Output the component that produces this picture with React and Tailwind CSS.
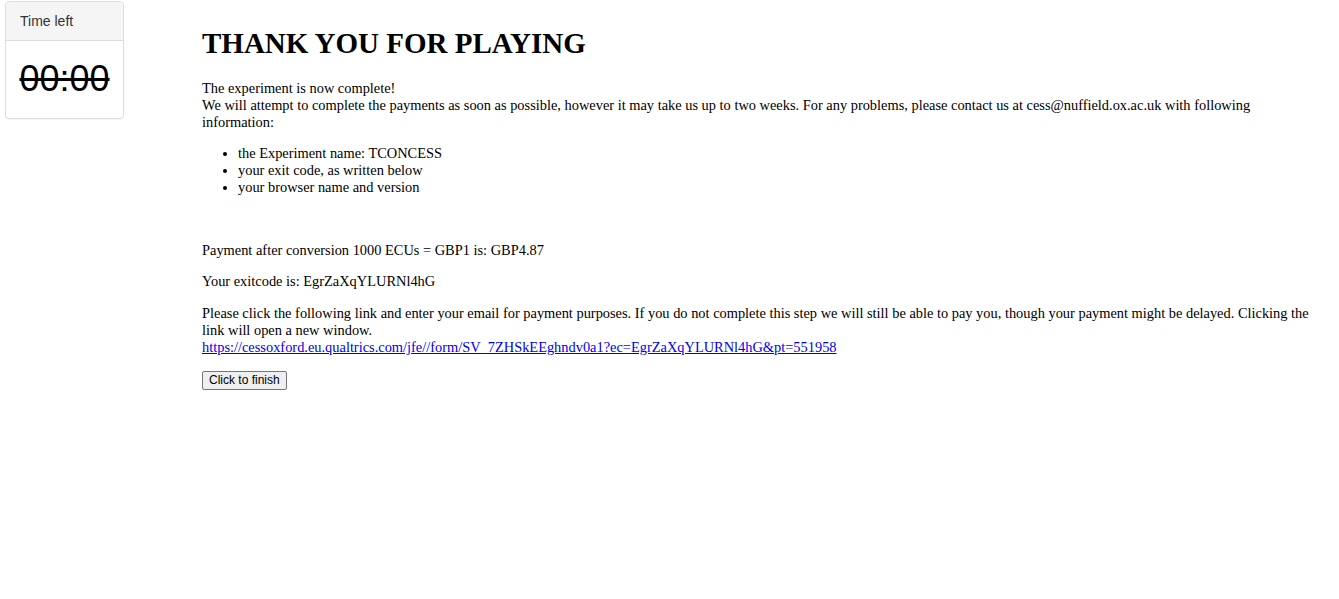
export default function App() {
  return (
    <div className="flex min-h-[599px] bg-white">
      <div className="w-[202px] shrink-0 pl-[5px] pt-[1px]">
        <div className="w-[119px] rounded-[4px] border border-[#dddddd] bg-white shadow-[0_1px_1px_rgba(0,0,0,0.05)]">
          <div className="h-[39px] rounded-t-[3px] border-b border-[#dddddd] bg-[#f5f5f5] px-[14px] pt-[9px] font-['Liberation_Sans',Arial,sans-serif] text-[14px] leading-[20px] text-[#333333]">
            Time left
          </div>
          <div className="flex h-[77px] items-center justify-center pb-[2px] font-['Liberation_Sans',Arial,sans-serif] text-[36px] leading-none text-black line-through">
            00:00
          </div>
        </div>
      </div>
      <div className="flex-1 pr-[20px] font-['Liberation_Serif','Times_New_Roman',serif] text-[14.4px] leading-[17px] text-black">
        <h1 className="mt-[26px] mb-[20px] text-[29px] font-bold leading-[34px]">THANK YOU FOR PLAYING</h1>
        <p>
          The experiment is now complete!
          <br />
          We will attempt to complete the payments as soon as possible, however it may take us up to two weeks. For any problems, please contact us at cess@nuffield.ox.ac.uk with following information:
        </p>
        <ul className="my-[14px] list-disc pl-[36px]">
          <li>the Experiment name: TCONCESS</li>
          <li>your exit code, as written below</li>
          <li>your browser name and version</li>
        </ul>
        <div className="h-[32px]" />
        <p className="mb-[14px]">Payment after conversion 1000 ECUs = GBP1 is: GBP4.87</p>
        <p className="mb-[15px]">Your exitcode is: EgrZaXqYLURNl4hG</p>
        <p className="mb-[15px]">
          Please click the following link and enter your email for payment purposes. If you do not complete this step we will still be able to pay you, though your payment might be delayed. Clicking the link will open a new window.
          <br />
          <a href="#" className="text-[#0000ee] underline">
            https://cessoxford.eu.qualtrics.com/jfe//form/SV_7ZHSkEEghndv0a1?ec=EgrZaXqYLURNl4hG&amp;pt=551958
          </a>
        </p>
        <button className="h-[19px] rounded-[2px] border border-[#767676] bg-[#efefef] px-[6px] font-['Liberation_Sans',Arial,sans-serif] text-[12px] leading-[15px] text-black">
          Click to finish
        </button>
      </div>
    </div>
  );
}
